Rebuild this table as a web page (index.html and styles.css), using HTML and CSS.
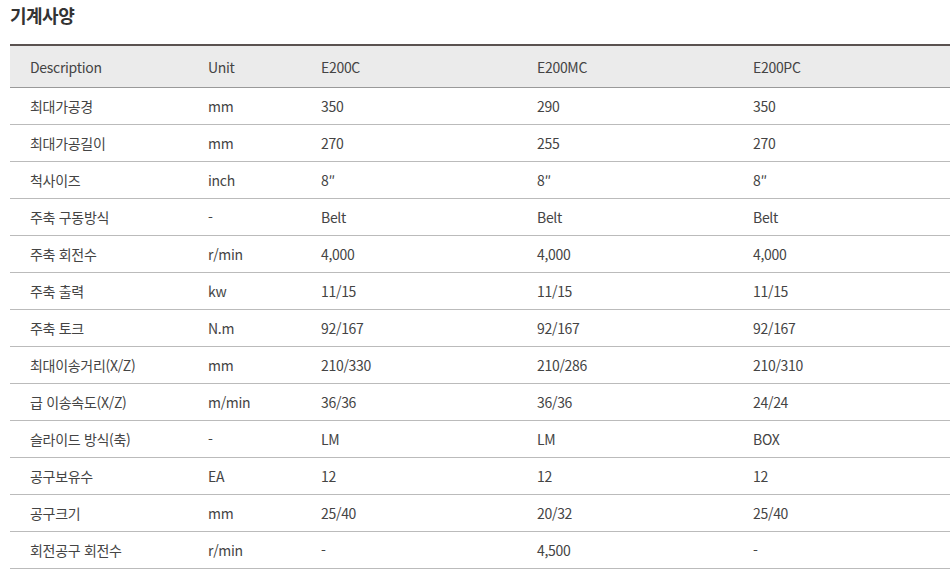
FILE: index.html
```html
<!DOCTYPE html>
<html lang="ko">
<head>
<meta charset="utf-8">
<title>기계사양</title>
<link rel="stylesheet" href="styles.css">
</head>
<body>
<div class="page">
  <h2 class="title">기계사양</h2>
  <table class="spec">
    <colgroup>
      <col class="c1"><col class="c2"><col class="c3"><col class="c4"><col class="c5">
    </colgroup>
    <thead>
      <tr><th>Description</th><th>Unit</th><th>E200C</th><th>E200MC</th><th>E200PC</th></tr>
    </thead>
    <tbody>
      <tr><td>최대가공경</td><td>mm</td><td>350</td><td>290</td><td>350</td></tr>
      <tr><td>최대가공길이</td><td>mm</td><td>270</td><td>255</td><td>270</td></tr>
      <tr><td>척사이즈</td><td>inch</td><td>8″</td><td>8″</td><td>8″</td></tr>
      <tr><td>주축 구동방식</td><td>-</td><td>Belt</td><td>Belt</td><td>Belt</td></tr>
      <tr><td>주축 회전수</td><td>r/min</td><td>4,000</td><td>4,000</td><td>4,000</td></tr>
      <tr><td>주축 출력</td><td>kw</td><td>11/15</td><td>11/15</td><td>11/15</td></tr>
      <tr><td>주축 토크</td><td>N.m</td><td>92/167</td><td>92/167</td><td>92/167</td></tr>
      <tr><td>최대이송거리(X/Z)</td><td>mm</td><td>210/330</td><td>210/286</td><td>210/310</td></tr>
      <tr><td>급 이송속도(X/Z)</td><td>m/min</td><td>36/36</td><td>36/36</td><td>24/24</td></tr>
      <tr><td>슬라이드 방식(축)</td><td>-</td><td>LM</td><td>LM</td><td>BOX</td></tr>
      <tr><td>공구보유수</td><td>EA</td><td>12</td><td>12</td><td>12</td></tr>
      <tr><td>공구크기</td><td>mm</td><td>25/40</td><td>20/32</td><td>25/40</td></tr>
      <tr><td>회전공구 회전수</td><td>r/min</td><td>-</td><td>4,500</td><td>-</td></tr>
    </tbody>
  </table>
</div>
</body>
</html>
```

FILE: styles.css
```css
html, body {
  margin: 0;
  padding: 0;
  background: #fff;
}
body {
  font-family: "Noto Sans CJK KR", "Noto Sans", sans-serif;
  color: #444;
}
.page {
  padding: 0 1px 0 10px;
}
.title {
  margin: 0;
  padding-top: 3px;
  height: 41px;
  font-size: 18px;
  line-height: 24px;
  font-weight: 700;
  color: #333;
  letter-spacing: -0.5px;
}
.spec {
  width: 940px;
  border-collapse: collapse;
  table-layout: fixed;
  border-top: 2px solid #5a5250;
}
.c1 { width: 178px; }
.c2 { width: 113px; }
.c3 { width: 216px; }
.c4 { width: 216px; }
.c5 { width: 217px; }
.spec th {
  background: #ebebeb;
  height: 41px;
  padding: 0 0 0 20px;
  text-align: left;
  font-weight: 400;
  font-size: 14px;
  color: #444;
  border-bottom: 1px solid #999;
  letter-spacing: -0.3px;
}
.spec td {
  height: 36px;
  padding: 0 0 0 20px;
  font-size: 14px;
  color: #444;
  border-bottom: 1px solid #bbb;
  letter-spacing: -0.3px;
}
```
